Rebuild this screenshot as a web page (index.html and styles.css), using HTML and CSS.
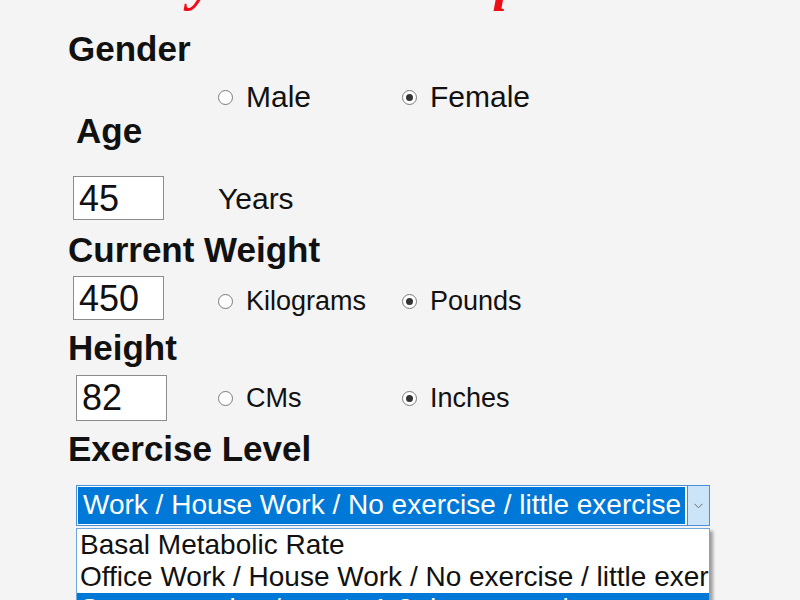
FILE: index.html
```html
<!DOCTYPE html>
<html lang="en">
<head>
    <meta charset="UTF-8">
    <meta name="viewport" content="width=device-width, initial-scale=1.0">
    <title>Daily Calorie Requirement</title>
    <link rel="stylesheet" href="styles.css">
</head>
<body>

    <div class="page">
        <h1 class="title">Daily Calorie Requirement</h1>

        <div class="heading heading-gender">Gender</div>
        <div class="row row-gender">
            <span class="spacer"></span>
            <label class="opt big"><span class="radio"></span>Male</label>
            <label class="opt big"><span class="radio checked"></span>Female</label>
        </div>

        <div class="heading heading-age">Age</div>
        <div class="row row-age">
            <span class="spacer"><span class="field">45</span></span>
            <span class="unit big">Years</span>
        </div>

        <div class="heading heading-weight">Current Weight</div>
        <div class="row row-weight">
            <span class="spacer"><span class="field">450</span></span>
            <label class="opt"><span class="radio"></span>Kilograms</label>
            <label class="opt"><span class="radio checked"></span>Pounds</label>
        </div>

        <div class="heading heading-height">Height</div>
        <div class="row row-height">
            <span class="spacer"><span class="field shifted">82</span></span>
            <label class="opt"><span class="radio"></span>CMs</label>
            <label class="opt"><span class="radio checked"></span>Inches</label>
        </div>

        <div class="heading heading-exercise">Exercise Level</div>
        <div class="dropdown">
            <div class="select-box">
                <span class="select-text">Work / House Work / No exercise / little exercise</span>
                <span class="select-btn">
                    <svg width="9" height="6" viewBox="0 0 9 6"><path d="M0.5 0.8 L4.5 4.8 L8.5 0.8" fill="none" stroke="#6d6d6d" stroke-width="1"/></svg>
                </span>
            </div>
            <ul class="options">
                <li>Basal Metabolic Rate</li>
                <li>Office Work / House Work / No exercise / little exercise</li>
                <li class="active">Some exercise / sports 1-3 days a week</li>
            </ul>
        </div>
    </div>

</body>
</html>
```

FILE: styles.css
```css
html, body {
    margin: 0;
    background-color: #f4f4f4;
    overflow: hidden;
}
body {
    font-family: "Liberation Sans", Arial, sans-serif;
    color: #111;
}
.page {
    padding-left: 68px;
}
.title {
    margin: -49px 0 0 20px;
    height: 57px;
    font-family: "Liberation Serif", "Times New Roman", serif;
    font-style: italic;
    font-weight: bold;
    font-size: 57px;
    line-height: 57px;
    color: #ee0e16;
    white-space: nowrap;
}
.heading {
    height: 40px;
    font-size: 35px;
    font-weight: bold;
    line-height: 40px;
}
.heading-gender { margin-top: 21px; }
.heading-age { padding-left: 8px; }
.heading-weight { margin-top: 10px; }
.heading-height { margin-top: 8px; }
.heading-exercise { margin-top: 8px; }

.row {
    display: flex;
    align-items: center;
}
.spacer {
    width: 150px;
    flex-shrink: 0;
}
.row-gender {
    margin-top: 14px;
    height: 28px;
}
.row-age {
    margin-top: 25px;
    height: 44px;
}
.row-weight {
    margin-top: 5px;
    height: 45px;
}
.row-height {
    margin-top: 7px;
    height: 46px;
}
.row-height .opt {
    padding-top: 1px;
}
.field {
    display: block;
    width: 84px;
    height: 42px;
    margin-left: 5px;
    padding-left: 5px;
    border: 1px solid #8c8c8c;
    background: #fff;
    font-size: 36px;
    line-height: 44px;
    overflow: hidden;
}
.field.shifted {
    margin-left: 8px;
    height: 44px;
}
.unit {
    padding-top: 2px;
}
.opt {
    display: flex;
    align-items: center;
    width: 184px;
    padding-top: 7px;
    font-size: 27px;
}
.opt.big {
    padding-top: 0;
    font-size: 30px;
}
.big {
    font-size: 30px;
}
.radio {
    width: 13px;
    height: 13px;
    margin-right: 13px;
    border: 1px solid #7a7a7a;
    border-radius: 50%;
    background: #fff;
    position: relative;
    flex-shrink: 0;
}
.radio.checked::after {
    content: "";
    position: absolute;
    left: 3px;
    top: 3px;
    width: 7px;
    height: 7px;
    border-radius: 50%;
    background: #333;
}

.dropdown {
    margin: 16px 0 0 8px;
    width: 634px;
}
.select-box {
    display: flex;
    height: 39px;
    border: 1px solid #4a90d9;
    background: #fff;
}
.select-text {
    flex: 1;
    margin: 1px 2px 1px 1px;
    background: #0078d7;
    color: #fff;
    font-size: 28px;
    line-height: 36px;
    padding-left: 5px;
    white-space: nowrap;
    overflow: hidden;
}
.select-btn {
    width: 21px;
    display: flex;
    align-items: center;
    justify-content: center;
    background: #cce4f7;
    border-left: 1px solid #3c8ad8;
}
.options {
    list-style: none;
    margin: 2px 0 0;
    padding: 0;
    border: 1px solid #6fa6dc;
    background: #fff;
    box-shadow: 3px 3px 3px rgba(0, 0, 0, 0.35);
}
.options li {
    height: 32px;
    padding-left: 3px;
    font-size: 28px;
    line-height: 32px;
    white-space: nowrap;
    overflow: hidden;
}
.options li.active {
    background: #0078d7;
    color: #fff;
}
```
